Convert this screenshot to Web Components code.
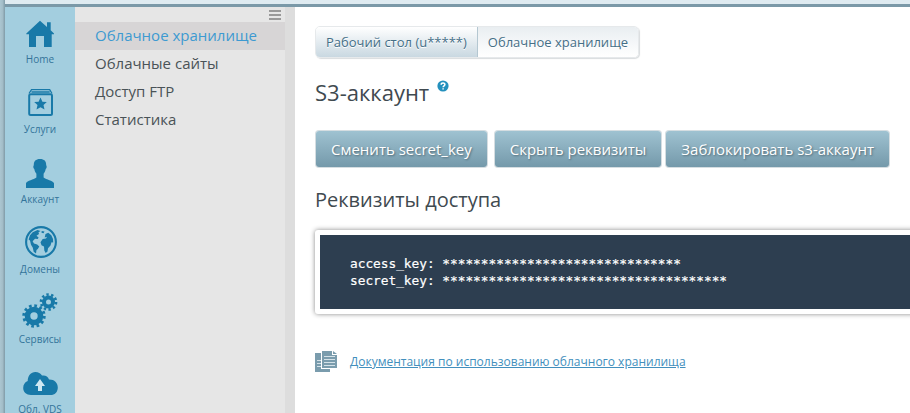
<!DOCTYPE html>
<html lang="ru">
<head>
<meta charset="utf-8">
<title>S3-аккаунт</title>
<style>
    html, body {
        margin: 0;
        height: 100%;
        overflow: hidden;
    }
    body {
        font-family: "Open Sans", "Noto Sans", sans-serif;
        color: #3f4a50;
        background: #fff;
        --accent: #1879a8;
        --steel: #7b99a8;
    }
</style>
</head>
<body>
<panel-app>
    <side-nav slot="nav">
        <nav-item icon="home">Home</nav-item>
        <nav-item icon="services">Услуги</nav-item>
        <nav-item icon="account">Аккаунт</nav-item>
        <nav-item icon="globe">Домены</nav-item>
        <nav-item icon="gears">Сервисы</nav-item>
        <nav-item icon="cloud">Обл. VDS</nav-item>
    </side-nav>
    <sub-menu slot="menu">
        <sub-item selected>Облачное хранилище</sub-item>
        <sub-item>Облачные сайты</sub-item>
        <sub-item>Доступ FTP</sub-item>
        <sub-item>Статистика</sub-item>
    </sub-menu>
    <bread-crumbs>
        <span>Рабочий стол (u*****)</span>
        <span>Облачное хранилище</span>
    </bread-crumbs>
    <page-title help>S3-аккаунт</page-title>
    <button-row>
        <action-button>Сменить secret_key</action-button>
        <action-button style="margin-right: -3px">Скрыть реквизиты</action-button>
        <action-button>Заблокировать s3-аккаунт</action-button>
    </button-row>
    <section-title>Реквизиты доступа</section-title>
    <key-panel>access_key: *******************************
secret_key: *************************************</key-panel>
    <doc-link>Документация по использованию облачного хранилища</doc-link>
</panel-app>

<script>
    const ICONS = {
        home: `<path d="M20 8.7 27 15V10.3h3.7V18.3L34 21.4V22.3H31.7V35H24V24H16V35H9V22.3H6.3V21.4Z"/>`,
        services: `<rect x="9.2" y="12.2" width="22.8" height="20.8" rx="1.5" fill="none" stroke="currentColor" stroke-width="2"/>
            <path d="M9 11.5 11.5 7.7H29.7L32 11.5M11.5 10H29.7" fill="none" stroke="currentColor" stroke-width="1.3"/>
            <path d="M20.5 15.5 22.4 19.7 26.8 20.1 23.5 23.1 24.5 27.5 20.5 25.2 16.5 27.5 17.5 23.1 14.2 20.1 18.6 19.7Z"/>`,
        account: `<path d="M20 7c4.3 0 6.3 2.1 6.2 6.2.8.8.6 3-.5 3.9-.4 2.1-1.1 3.5-2.1 4.7v3.6c2.7 2.4 9.3 2.8 10.4 5.8V36H6v-4.8c1.1-3 7.7-3.4 10.4-5.8v-3.6c-1-1.2-1.7-2.6-2.1-4.7-1.1-.9-1.3-3.1-.5-3.9C13.7 9.1 15.7 7 20 7Z"/>`,
        globe: `<circle cx="21" cy="20" r="14.9" fill="none" stroke="currentColor" stroke-width="2.1"/>
            <path d="M17.5 8 20.5 9 18.5 10.3 19 12 16.5 13.8 18.6 15.5 17.8 17 15 16.7 12.6 19.2 14 21.4 17.2 22.5 19.3 24.4 17.8 27 16.5 28 16 31.4 13.7 29.8 12.7 25.5 11 22.8 10 18.5 8.6 17.4 10 13.3 12.7 10.2Z"/>
            <path d="M21.7 9 24.5 9.5 23.5 11.2 21.5 10.8ZM25.5 12 28.3 10.8 31.3 13.3 33 17 33.2 20.5 31.5 20.2 30.5 23.5 28 26.2 27.5 29.5 25.7 31 24.3 28.5 24 24.6 21.5 23.2 20.5 20.2 22.7 17 26 16.5 27 14.8 24.7 15.5Z"/>`,
        gears: `<g fill="none" stroke="currentColor">
                <circle cx="14" cy="24" r="6.5" stroke-width="5.6"/>
                <circle cx="14" cy="24" r="10.2" stroke-width="3" stroke-dasharray="2.67 2.67"/>
                <circle cx="28.5" cy="10" r="4.5" stroke-width="4"/>
                <circle cx="28.5" cy="10" r="7.5" stroke-width="2.7" stroke-dasharray="2.356 2.356"/>
            </g>`,
        cloud: `<path d="M11 33C6.3 33 3.2 29.9 3.2 26c0-3.3 1.7-5.8 4.5-6.9C7.7 13.7 11 10 15.3 10c3.2 0 5.2 1.2 6.7 3.6 3.4-.6 6 1 7 3.9 5.2-.2 8.8 3.2 8.8 7.9 0 4.5-3 7.6-7.3 7.6Z"/>
            <path d="M20 17 25 24H22V29H18V24H15Z" fill="#cfe8f2"/>`
    };

    // Shared base: puts the element's markup and styles into an open shadow root
    class PanelElement extends HTMLElement {
        constructor() {
            super();
            this.attachShadow({ mode: 'open' });
        }
        connectedCallback() {
            this.shadowRoot.innerHTML = this.render();
        }
        render() {
            return '<slot></slot>';
        }
    }

    class PanelApp extends PanelElement {
        render() {
            return `<style>
    :host {
        display: grid;
        grid-template-columns: 5px 70px 220px 1fr;
        grid-template-rows: 7px 1fr;
        height: 100vh;
    }
    .edge {
        grid-row: 1 / 3;
        background: linear-gradient(90deg, #abc6d1, #a3bdc8 50%, #809ba7);
    }
    .top {
        grid-column: 2 / 5;
        box-sizing: border-box;
        background: #dfebf1;
        border-bottom: 3px solid var(--steel);
    }
    main {
        min-width: 0;
        padding: 19px 0 0 20px;
    }
</style>
<div class="edge"></div>
<div class="top"></div>
<slot name="nav"></slot>
<slot name="menu"></slot>
<main><slot></slot></main>`;
        }
    }

    class SideNav extends PanelElement {
        render() {
            return `<style>
    :host {
        display: flex;
        flex-direction: column;
        box-sizing: border-box;
        min-height: 0;
        padding-top: 5px;
        overflow: hidden;
        background: #a3cedf;
    }
</style>
<slot></slot>`;
        }
    }

    class NavItem extends PanelElement {
        render() {
            return `<style>
    :host {
        display: flex;
        flex: 0 0 70px;
        flex-direction: column;
        align-items: center;
        color: var(--accent);
        cursor: pointer;
    }
    svg {
        display: block;
        flex: none;
        fill: currentColor;
    }
    span {
        font-size: 10px;
        line-height: 14px;
        white-space: nowrap;
        color: #33749a;
    }
</style>
<svg width="40" height="40" viewBox="0 0 40 40">${ICONS[this.getAttribute('icon')]}</svg>
<span><slot></slot></span>`;
        }
    }

    class SubMenu extends PanelElement {
        render() {
            return `<style>
    :host {
        display: block;
        background: #e6e6e6;
        border-right: 10px solid #ddd;
    }
    .toggle {
        display: flex;
        justify-content: flex-end;
        height: 15px;
        padding-right: 4px;
    }
    .toggle i {
        width: 12px;
        height: 10px;
        margin-top: 3px;
        background: repeating-linear-gradient(#999 0 2px, transparent 2px 4px);
    }
</style>
<div class="toggle"><i></i></div>
<slot></slot>`;
        }
    }

    class SubItem extends PanelElement {
        render() {
            return `<style>
    :host {
        display: block;
        padding: 0 0 2px 20px;
        font-size: 15px;
        line-height: 26px;
        white-space: nowrap;
        color: #4a5357;
    }
    :host([selected]) {
        color: #3d9ad1;
        background: #d7d5d6;
    }
</style>
<slot></slot>`;
        }
    }

    class BreadCrumbs extends PanelElement {
        render() {
            return `<style>
    :host {
        display: flex;
        width: max-content;
        height: 30px;
        border: 1px solid #e6e9eb;
        border-radius: 5px;
        box-shadow: 1px 1px 1px #d9dcde;
        overflow: hidden;
        font-size: 13px;
        line-height: 31px;
        white-space: nowrap;
        color: #456f87;
    }
    ::slotted(span) {
        padding: 0 10px;
        background: linear-gradient(#e9eef1, #fff);
        text-shadow: 0 1px 0 #fff;
    }
    ::slotted(span:first-child) {
        border-right: 1px solid #b4c7d1;
        background: linear-gradient(#fff, #c9d8e1);
    }
</style>
<slot></slot>`;
        }
    }

    class PageTitle extends PanelElement {
        render() {
            const help = this.hasAttribute('help') ? `<svg width="12" height="12" viewBox="0 0 12 12">
    <circle cx="6" cy="6" r="5.6" fill="#2490bd"/>
    <path d="M4.2 4.7C4.2 2.5 7.9 2.5 7.9 4.6 7.9 5.9 6.1 5.9 6.1 7.3M6.1 8.2V9.5" fill="none" stroke="#fff" stroke-width="1.5"/>
</svg>` : '';
            return `<style>
    :host {
        display: flex;
        height: 30px;
        margin-top: 20px;
        font-size: 22px;
        line-height: 29px;
    }
    svg {
        margin: 2px 0 0 8px;
    }
</style>
<slot></slot>${help}`;
        }
    }

    class ButtonRow extends PanelElement {
        render() {
            return `<style>
    :host {
        display: flex;
        gap: 8px;
        margin: 23px 0 0 1px;
    }
</style>
<slot></slot>`;
        }
    }

    class ActionButton extends PanelElement {
        render() {
            return `<style>
    :host {
        display: block;
        height: 36px;
        padding: 0 15px;
        border-radius: 3px;
        box-shadow: 0 0 0 1px #d5dde1;
        background: linear-gradient(#9fc2d1, #7499aa);
        font-size: 15px;
        line-height: 37px;
        white-space: nowrap;
        color: #fff;
        text-shadow: 1px 1px 2px #526c78;
        cursor: pointer;
    }
</style>
<slot></slot>`;
        }
    }

    class SectionTitle extends PanelElement {
        render() {
            return `<style>
    :host {
        display: block;
        margin-top: 19px;
        font-size: 20px;
        line-height: 28px;
    }
</style>
<slot></slot>`;
        }
    }

    class KeyPanel extends PanelElement {
        render() {
            return `<style>
    :host {
        display: block;
        margin: 16px -10px 0 0;
        padding: 20px 30px;
        border: 5px solid #fff;
        border-radius: 3px;
        box-shadow: 0 0 5px #888;
        background: #2d3e50;
        background-clip: padding-box;
        font: 12.79px/17px "DejaVu Sans Mono", monospace;
        color: #fff;
        -webkit-text-stroke: .2px #fff;
    }
    slot {
        display: block;
        white-space: pre;
    }
</style>
<slot></slot>`;
        }
    }

    class DocLink extends PanelElement {
        render() {
            return `<style>
    :host {
        display: flex;
        gap: 13px;
        margin-top: 37px;
        font-size: 12px;
        line-height: 22px;
        white-space: nowrap;
    }
    a {
        color: #428fbd;
        text-decoration: underline;
    }
</style>
<svg width="22" height="21" viewBox="0 0 22 21">
    <path d="M0 2H6V18H15V21H0Z" fill="#7a9cad"/>
    <path d="M2 9.5H6M2 12.5H6M2 15.5H6" stroke="#d5e2e8"/>
    <path d="M7 0H17V4H22V17H7Z" fill="#7a9cad"/>
    <path d="M18 0 22 3H18Z" fill="#7a9cad"/>
    <path d="M9 5.5H20M9 8.5H20M9 11.5H20M9 14.5H20" stroke="#d5e2e8"/>
</svg>
<a><slot></slot></a>`;
        }
    }

    customElements.define('panel-app', PanelApp);
    customElements.define('side-nav', SideNav);
    customElements.define('nav-item', NavItem);
    customElements.define('sub-menu', SubMenu);
    customElements.define('sub-item', SubItem);
    customElements.define('bread-crumbs', BreadCrumbs);
    customElements.define('page-title', PageTitle);
    customElements.define('button-row', ButtonRow);
    customElements.define('action-button', ActionButton);
    customElements.define('section-title', SectionTitle);
    customElements.define('key-panel', KeyPanel);
    customElements.define('doc-link', DocLink);
</script>
</body>
</html>
